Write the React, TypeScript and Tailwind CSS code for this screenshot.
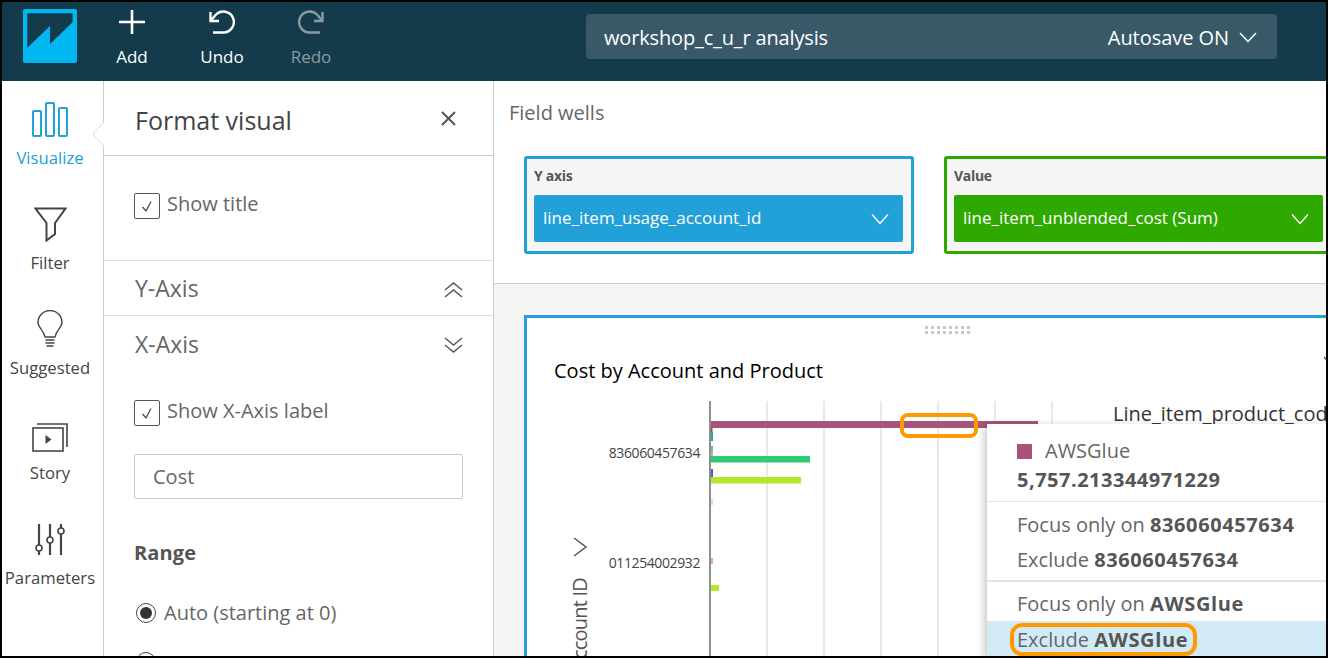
import {ReactNode} from "react";

const Logo = () => (
	<svg width="54" height="54" viewBox="0 0 54 54">
		<rect width="54" height="54" rx="2" fill="#00b7f1" />
		<path d="M4.3 4.3H49.7V13L27 35V17L4.3 38.7Z" fill="#143b4c" />
	</svg>
);

const ToolButton = ({
	label,
	icon,
	muted,
	width,
}: {
	label: string;
	icon: ReactNode;
	muted?: boolean;
	width: string;
}) => (
	<div className={`flex flex-col items-center ${width}`}>
		<div className="h-[36px] flex items-center mt-[-2px]">{icon}</div>
		<span className={`text-[17px] leading-[24px] mt-[5px] ${muted ? "text-[#8a9aa2]" : "text-white"}`}>
			{label}
		</span>
	</div>
);

const NavItem = ({label, icon, active}: {label: string; icon: ReactNode; active?: boolean}) => (
	<div className="h-[105px] flex flex-col items-center">
		<div className="h-[64px] flex items-end justify-center pb-[8px]">{icon}</div>
		<span className={`text-[16.7px] leading-[24px] mt-[1px] ${active ? "text-[#22a0d8]" : "text-[#444]"}`}>
			{label}
		</span>
	</div>
);

const Checkbox = ({label}: {label: string}) => (
	<div className="flex items-center gap-[7px]">
		<div className="w-[26px] h-[26px] border border-[#555] rounded-[2px] flex items-center justify-center">
			<svg width="14" height="14" viewBox="0 0 14 14" fill="none" stroke="#444" strokeWidth="1.2">
				<path d="M2.5 8L6 12L11 2.5" />
			</svg>
		</div>
		<span className="text-[20px] text-[#666] leading-[26px] mt-[-4px]">{label}</span>
	</div>
);

const DoubleChevron = ({up}: {up?: boolean}) => (
	<svg width="19" height="16" viewBox="0 0 19 16" fill="none" stroke="#555" strokeWidth="1.4" className="mt-[3px]">
		{up ? <path d="M1 8L9.5 1L18 8M1 15L9.5 8L18 15" /> : <path d="M1 1L9.5 8L18 1M1 8L9.5 15L18 8" />}
	</svg>
);

const Well = ({
	title,
	field,
	border,
	fill,
	width,
}: {
	title: string;
	field: string;
	border: string;
	fill: string;
	width: string;
}) => (
	<div className={`${width} h-[98px] shrink-0 border-[3px] ${border} rounded-[3px] bg-[#f5f5f5] pl-[7px] pr-[8px] pt-[8px]`}>
		<div className="text-[14px] leading-[18px] font-bold tracking-[-0.3px] text-[#555]">{title}</div>
		<div className={`mt-[10px] h-[47px] rounded-[2px] ${fill} flex items-center justify-between pl-[9px] pr-[13px]`}>
			<span className="text-[17px] text-white mt-[-2px]">{field}</span>
			<svg width="20" height="12" viewBox="0 0 20 12" fill="none" stroke="#fff" strokeWidth="1.4">
				<path d="M2 1.5L10 10.5L18 1.5" />
			</svg>
		</div>
	</div>
);

const gridX = [240, 297, 354, 411, 468, 525];

const Chart = () => (
	<svg width="800" height="260" viewBox="0 0 800 260" className="block">
		{gridX.map((x) => (
			<line key={x} x1={x} x2={x} y1="0" y2="260" stroke="#e2e2e2" strokeWidth="1.5" />
		))}
		<line x1="183" x2="183" y1="0" y2="260" stroke="#8f8f8f" strokeWidth="2" />
		<rect x="184" y="20" width="327" height="7" fill="#a8547a" />
		<rect x="184" y="27" width="1.5" height="6" fill="#8a5a2a" />
		<rect x="184" y="31" width="2" height="9" fill="#2aa6a0" />
		<rect x="184" y="45" width="2" height="6" fill="#33dba0" />
		<rect x="184" y="50" width="2" height="5" fill="#e59ac8" />
		<rect x="184" y="55" width="99" height="6.5" fill="#2ecc71" />
		<rect x="184" y="68" width="2" height="10" fill="#5a55d8" />
		<rect x="184" y="76" width="90" height="6.5" fill="#b5e62c" />
		<rect x="184" y="98" width="2" height="6" fill="#bfe6f2" />
		<rect x="184" y="157" width="2" height="6" fill="#e59ac8" />
		<rect x="184" y="184" width="8" height="6" fill="#b5e62c" />
		<text x="173" y="57" textAnchor="end" fontSize="14" letterSpacing="-0.4" fill="#444">
			836060457634
		</text>
		<text x="173" y="167" textAnchor="end" fontSize="14" letterSpacing="-0.4" fill="#444">
			011254002932
		</text>
		<path d="M47 137L59 146L47 155" fill="none" stroke="#555" strokeWidth="1.5" />
		<text transform="translate(60 177) rotate(-90)" textAnchor="end" fontSize="20" letterSpacing="-0.8" fill="#555">
			Account ID
		</text>
		<text x="586" y="20" fontSize="20" fill="#333">
			Line_item_product_code
		</text>
	</svg>
);

const MenuRow = ({text, bold}: {text: string; bold: string}) => (
	<div className="h-[35px] pl-[30px] flex items-center text-[20px] text-[#666] whitespace-nowrap">
		{text}&nbsp;<b className="font-bold text-[#555] tracking-[0.6px]">{bold}</b>
	</div>
);

const Tooltip = () => (
	<div className="absolute left-[460px] top-[106px] w-[500px] bg-white shadow-[-3px_2px_8px_rgba(0,0,0,0.22)]">
		<div className="h-[78px] pl-[30px] pt-[13px] border-b border-[#e3e3e3]">
			<div className="flex items-center gap-[13px] h-[28px]">
				<div className="w-[15px] h-[15px] bg-[#a8547a]" />
				<span className="text-[20px] text-[#666]">AWSGlue</span>
			</div>
			<div className="text-[20px] leading-[30px] font-bold text-[#555] tracking-[0.5px]">5,757.213344971229</div>
		</div>
		<div className="pt-[5px] pb-[3px] border-b-2 border-[#e3e3e3]">
			<MenuRow text="Focus only on" bold="836060457634" />
			<MenuRow text="Exclude" bold="836060457634" />
		</div>
		<div className="pt-[4px]">
			<MenuRow text="Focus only on" bold="AWSGlue" />
			<div className="bg-[#d2e9f6] pt-[1px]">
				<MenuRow text="Exclude" bold="AWSGlue" />
			</div>
		</div>
	</div>
);

const App = () => {
	return (
		<div className="w-[1328px] h-[658px] overflow-hidden border-2 border-black flex flex-col bg-white font-['Open_Sans',sans-serif]">
			<header className="h-[79px] shrink-0 bg-[#143b4c] flex items-start">
				<div className="ml-[21px] mt-[7px]">
					<Logo />
				</div>
				<div className="flex ml-[15px] mt-[4px]">
					<ToolButton
						width="w-[80px]"
						label="Add"
						icon={
							<svg width="26" height="24" viewBox="0 0 26 24" stroke="#fff" strokeWidth="2.6">
								<path d="M13 0V24M0 12H26" />
							</svg>
						}
					/>
					<ToolButton
						width="w-[100px]"
						label="Undo"
						icon={
							<svg width="28" height="24" viewBox="0 0 28 24" fill="none" stroke="#fff" strokeWidth="2.4">
								<path d="M2.5 2V11H11" />
								<path d="M5 22.5H15.5A10.5 10.5 0 1 0 8 4.5L2.5 11" />
							</svg>
						}
					/>
					<ToolButton
						width="w-[78px]"
						muted
						label="Redo"
						icon={
							<svg width="28" height="24" viewBox="0 0 28 24" fill="none" stroke="#8a9aa2" strokeWidth="2.4">
								<path d="M25.5 2V11H17" />
								<path d="M23 22.5H12.5A10.5 10.5 0 1 1 20 4.5L25.5 11" />
							</svg>
						}
					/>
				</div>
				<div className="ml-[236px] mt-[12px] w-[691px] h-[45px] rounded-[4px] bg-[#3a5968] flex items-center justify-between pl-[18px] pr-[20px] text-white text-[20px]">
					<span className="tracking-[-0.15px] mt-[2px]">workshop_c_u_r analysis</span>
					<div className="flex items-center gap-[10px] mt-[2px]">
						<span className="tracking-[-0.05px]">Autosave ON</span>
						<svg width="18" height="11" viewBox="0 0 18 11" fill="none" stroke="#fff" strokeWidth="1.5">
							<path d="M1 1L9 9.5L17 1" />
						</svg>
					</div>
				</div>
			</header>

			<div className="flex flex-1 min-h-0">
				<nav className="w-[102px] shrink-0 border-r border-[#ccc] relative pr-[5px]">
					<NavItem
						active
						label="Visualize"
						icon={
							<svg width="36" height="35" viewBox="0 0 36 35" fill="none" stroke="#22a0d8" strokeWidth="2">
								<rect x="1" y="9" width="8" height="25" rx="1" />
								<rect x="14" y="1" width="8" height="33" rx="1" />
								<rect x="27" y="6" width="8" height="28" rx="1" />
							</svg>
						}
					/>
					<NavItem
						label="Filter"
						icon={
							<svg width="33" height="35" viewBox="0 0 33 35" fill="none" stroke="#444" strokeWidth="2">
								<path d="M1.5 1.5H31.5L21 16V27L12.5 33.5V16Z" />
							</svg>
						}
					/>
					<NavItem
						label="Suggested"
						icon={
							<svg width="26" height="37" viewBox="0 0 26 37" fill="none" stroke="#444" strokeWidth="1.4">
								<path d="M8 27C7 20 1 18 1 12.5A12 12 0 0 1 25 12.5C25 18 19 20 18 27Z" />
								<path d="M8.5 30H17.5M8.5 33H17.5M9.5 36H16.5" />
							</svg>
						}
					/>
					<NavItem
						label="Story"
						icon={
							<svg width="36" height="30" viewBox="0 0 36 30" fill="none" stroke="#444" strokeWidth="1.6">
								<rect x="1" y="6" width="30" height="23" />
								<path d="M5 2H35V25" />
								<path d="M13.5 13L19.5 17.5L13.5 22Z" fill="#444" stroke="none" />
							</svg>
						}
					/>
					<NavItem
						label="Parameters"
						icon={
							<svg width="30" height="34" viewBox="0 0 30 34" fill="none" stroke="#444" strokeWidth="2.2">
								<path d="M4 1V22M4 28V32M15 1V14M15 20V32M26 1V5M26 11V32" />
								<circle cx="4" cy="25" r="3" strokeWidth="1.6" />
								<circle cx="15" cy="17" r="3" strokeWidth="1.6" />
								<circle cx="26" cy="8" r="3" strokeWidth="1.6" />
							</svg>
						}
					/>
					<div className="absolute right-[-1px] top-[41px] w-[12px] h-[24px] bg-white overflow-hidden">
						<svg width="12" height="24" viewBox="0 0 12 24" fill="none" stroke="#d8d8d8">
							<path d="M12 0L1 12L12 24" />
						</svg>
					</div>
				</nav>

				<aside className="w-[390px] shrink-0 border-r border-[#ccc]">
					<div className="h-[75px] border-b border-[#ccc] flex items-center justify-between pl-[31px] pr-[37px]">
						<span className="text-[25px] text-[#444] mt-[5px]">Format visual</span>
						<svg width="15" height="15" viewBox="0 0 15 15" stroke="#555" strokeWidth="2" className="mt-[1px]">
							<path d="M1 1L14 14M14 1L1 14" />
						</svg>
					</div>
					<div className="h-[105px] border-b border-[#ddd] pl-[30px] pt-[37px]">
						<Checkbox label="Show title" />
					</div>
					<div className="h-[55px] border-b border-[#ddd] flex items-center justify-between pl-[31px] pr-[30px]">
						<span className="text-[23px] text-[#666] mt-[1px]">Y-Axis</span>
						<DoubleChevron up />
					</div>
					<div className="h-[55px] flex items-center justify-between pl-[31px] pr-[30px]">
						<span className="text-[23px] text-[#666] mt-[1px]">X-Axis</span>
						<DoubleChevron />
					</div>
					<div className="pl-[30px] pt-[29px]">
						<Checkbox label="Show X-Axis label" />
						<div className="mt-[28px] w-[329px] h-[45px] border border-[#ccc] rounded-[2px] pl-[18px] flex items-center text-[20px] text-[#666]">
							Cost
						</div>
						<div className="mt-[40px] text-[20px] leading-[28px] font-bold tracking-[0.1px] text-[#555]">Range</div>
						<div className="mt-[31px] flex items-center gap-[8px] ml-[2px]">
							<div className="w-[20px] h-[20px] rounded-full border border-[#444] flex items-center justify-center">
								<div className="w-[12px] h-[12px] rounded-full bg-[#333]" />
							</div>
							<span className="text-[20px] text-[#666]">Auto (starting at 0)</span>
						</div>
						<div className="mt-[24px] ml-[2px] w-[20px] h-[20px] rounded-full border border-[#444]" />
					</div>
				</aside>

				<main className="flex-1 min-w-0 flex flex-col overflow-hidden">
					<section className="h-[203px] shrink-0 border-b border-[#ccc] pl-[15px] pt-[17px]">
						<div className="text-[20px] leading-[30px] text-[#666]">Field wells</div>
						<div className="flex gap-[30px] ml-[15px] mt-[28px]">
							<Well
								title="Y axis"
								field="line_item_usage_account_id"
								border="border-[#22a0d8]"
								fill="bg-[#22a0d8]"
								width="w-[390px]"
							/>
							<Well
								title="Value"
								field="line_item_unblended_cost (Sum)"
								border="border-[#2fa900]"
								fill="bg-[#2fa900]"
								width="w-[390px]"
							/>
						</div>
					</section>
					<section className="flex-1 min-h-0 bg-[#f5f5f5] pl-[30px] pt-[31px]">
						<div className="relative w-[900px] h-[400px] bg-white border-[3px] border-[#22a0d8]">
							<svg width="46" height="9" viewBox="0 0 46 9" fill="#c8c8c8" className="mt-[8px] ml-[398px] block">
								{[0, 6, 12, 18, 24, 30, 36, 42].map((x) => (
									<g key={x}>
										<rect x={x} y="0" width="3" height="3" />
										<rect x={x} y="5" width="3" height="3" />
									</g>
								))}
							</svg>
							<svg width="12" height="8" viewBox="0 0 12 8" fill="none" stroke="#555" strokeWidth="1.4" className="absolute left-[796px] top-[38px]">
								<path d="M1 1L6 6.5L11 1" />
							</svg>
							<h2 className="ml-[27px] mt-[22px] text-[20px] leading-[28px] text-black">
								Cost by Account and Product
							</h2>
							<div className="mt-[16px]">
								<Chart />
							</div>
							<Tooltip />
							<div className="absolute left-[373px] top-[95px] w-[78px] h-[25px] border-4 border-[#ff9900] rounded-[8px]" />
							<div className="absolute left-[483px] top-[305px] w-[187px] h-[33px] border-4 border-[#ff9900] rounded-[12px]" />
						</div>
					</section>
				</main>
			</div>
		</div>
	);
};

export default App;
